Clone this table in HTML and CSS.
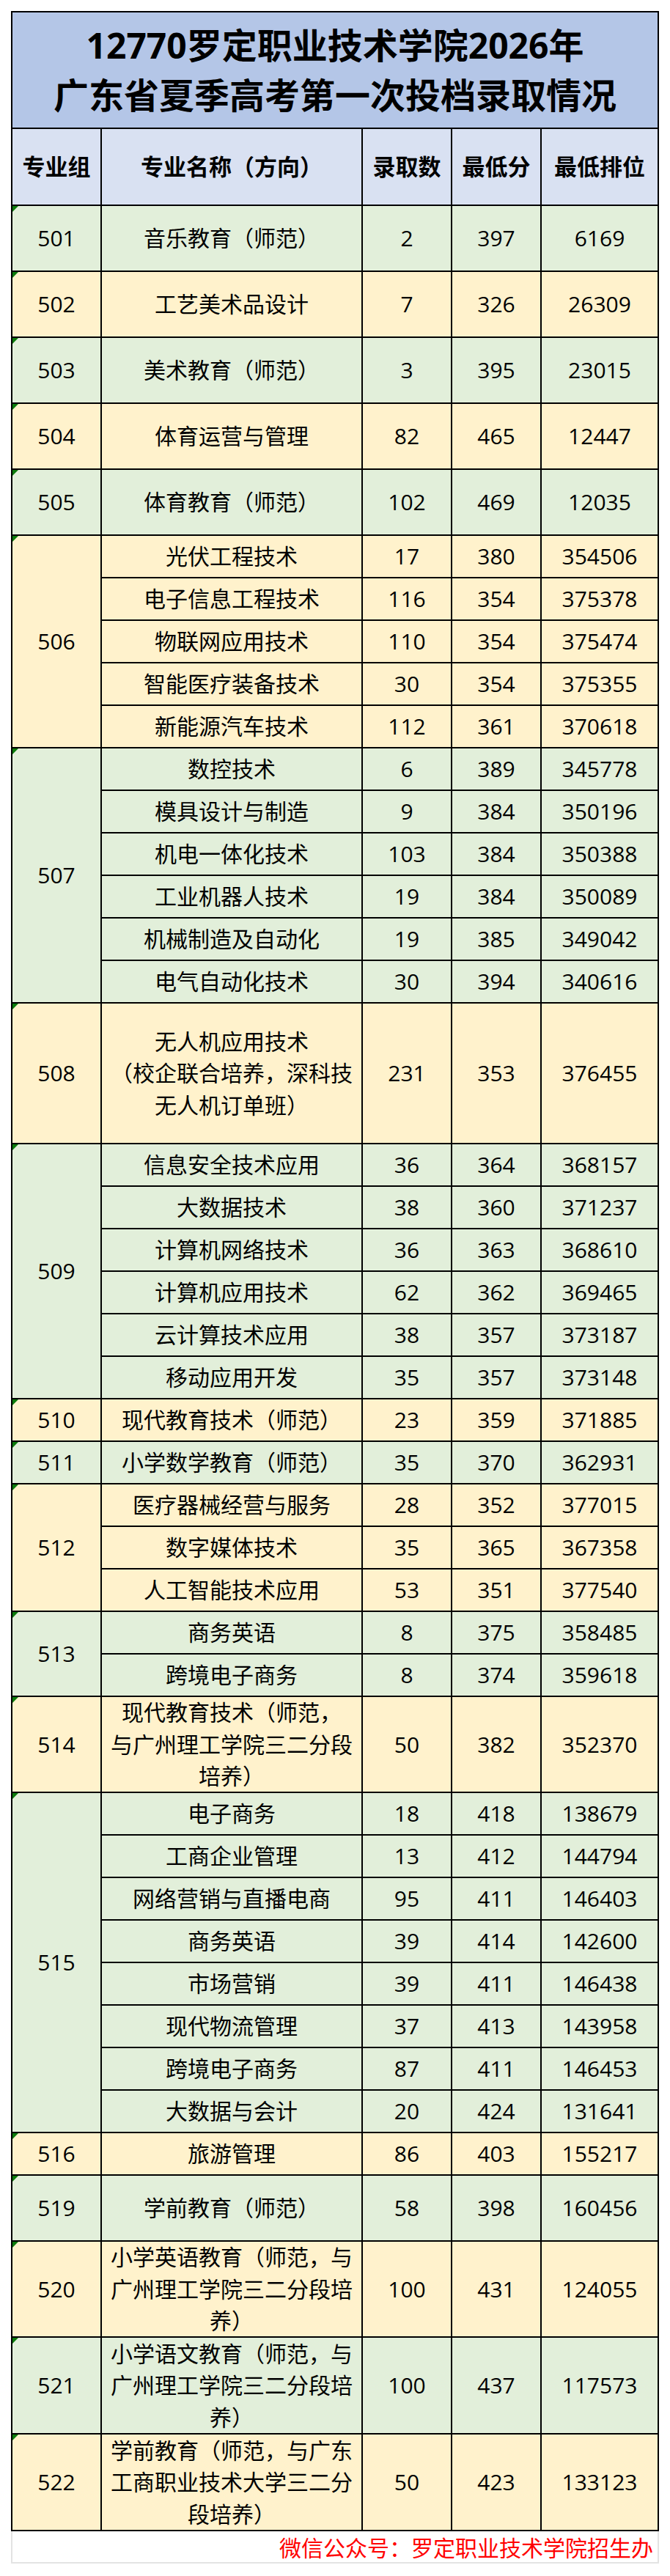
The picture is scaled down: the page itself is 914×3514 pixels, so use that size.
FILE: index.html
```html
<!DOCTYPE html>
<html lang="zh-CN">
<head>
<meta charset="utf-8">
<title>12770罗定职业技术学院2026年广东省夏季高考第一次投档录取情况</title>
<link rel="stylesheet" href="styles.css">
</head>
<body>
<div class="page">
  <div class="sheet">
    <div class="cell title">12770罗定职业技术学院2026年<br>广东省夏季高考第一次投档录取情况</div>
    <div class="cell head">专业组</div>
    <div class="cell head">专业名称（方向）</div>
    <div class="cell head">录取数</div>
    <div class="cell head">最低分</div>
    <div class="cell head">最低排位</div>

    <div class="group green">
      <div class="cell code">501</div>
      <div class="cell h90">音乐教育（师范）</div><div class="cell">2</div><div class="cell">397</div><div class="cell">6169</div>
    </div>
    <div class="group yellow">
      <div class="cell code">502</div>
      <div class="cell h90">工艺美术品设计</div><div class="cell">7</div><div class="cell">326</div><div class="cell">26309</div>
    </div>
    <div class="group green">
      <div class="cell code">503</div>
      <div class="cell h90">美术教育（师范）</div><div class="cell">3</div><div class="cell">395</div><div class="cell">23015</div>
    </div>
    <div class="group yellow">
      <div class="cell code">504</div>
      <div class="cell h90">体育运营与管理</div><div class="cell">82</div><div class="cell">465</div><div class="cell">12447</div>
    </div>
    <div class="group green">
      <div class="cell code">505</div>
      <div class="cell h90">体育教育（师范）</div><div class="cell">102</div><div class="cell">469</div><div class="cell">12035</div>
    </div>

    <div class="group yellow">
      <div class="cell code span5">506</div>
      <div class="row"><div class="cell h58">光伏工程技术</div><div class="cell">17</div><div class="cell">380</div><div class="cell">354506</div></div>
      <div class="row"><div class="cell h58">电子信息工程技术</div><div class="cell">116</div><div class="cell">354</div><div class="cell">375378</div></div>
      <div class="row"><div class="cell h58">物联网应用技术</div><div class="cell">110</div><div class="cell">354</div><div class="cell">375474</div></div>
      <div class="row"><div class="cell h58">智能医疗装备技术</div><div class="cell">30</div><div class="cell">354</div><div class="cell">375355</div></div>
      <div class="row"><div class="cell h58">新能源汽车技术</div><div class="cell">112</div><div class="cell">361</div><div class="cell">370618</div></div>
    </div>

    <div class="group green">
      <div class="cell code span6">507</div>
      <div class="row"><div class="cell h58">数控技术</div><div class="cell">6</div><div class="cell">389</div><div class="cell">345778</div></div>
      <div class="row"><div class="cell h58">模具设计与制造</div><div class="cell">9</div><div class="cell">384</div><div class="cell">350196</div></div>
      <div class="row"><div class="cell h58">机电一体化技术</div><div class="cell">103</div><div class="cell">384</div><div class="cell">350388</div></div>
      <div class="row"><div class="cell h58">工业机器人技术</div><div class="cell">19</div><div class="cell">384</div><div class="cell">350089</div></div>
      <div class="row"><div class="cell h58">机械制造及自动化</div><div class="cell">19</div><div class="cell">385</div><div class="cell">349042</div></div>
      <div class="row"><div class="cell h58">电气自动化技术</div><div class="cell">30</div><div class="cell">394</div><div class="cell">340616</div></div>
    </div>

    <div class="group yellow">
      <div class="cell code">508</div>
      <div class="cell h192">无人机应用技术<br>（校企联合培养，深科技<br>无人机订单班）</div><div class="cell">231</div><div class="cell">353</div><div class="cell">376455</div>
    </div>

    <div class="group green">
      <div class="cell code span6">509</div>
      <div class="row"><div class="cell h58">信息安全技术应用</div><div class="cell">36</div><div class="cell">364</div><div class="cell">368157</div></div>
      <div class="row"><div class="cell h58">大数据技术</div><div class="cell">38</div><div class="cell">360</div><div class="cell">371237</div></div>
      <div class="row"><div class="cell h58">计算机网络技术</div><div class="cell">36</div><div class="cell">363</div><div class="cell">368610</div></div>
      <div class="row"><div class="cell h58">计算机应用技术</div><div class="cell">62</div><div class="cell">362</div><div class="cell">369465</div></div>
      <div class="row"><div class="cell h58">云计算技术应用</div><div class="cell">38</div><div class="cell">357</div><div class="cell">373187</div></div>
      <div class="row"><div class="cell h58">移动应用开发</div><div class="cell">35</div><div class="cell">357</div><div class="cell">373148</div></div>
    </div>

    <div class="group yellow">
      <div class="cell code">510</div>
      <div class="cell h58">现代教育技术（师范）</div><div class="cell">23</div><div class="cell">359</div><div class="cell">371885</div>
    </div>
    <div class="group green">
      <div class="cell code">511</div>
      <div class="cell h58">小学数学教育（师范）</div><div class="cell">35</div><div class="cell">370</div><div class="cell">362931</div>
    </div>

    <div class="group yellow">
      <div class="cell code span3">512</div>
      <div class="row"><div class="cell h58">医疗器械经营与服务</div><div class="cell">28</div><div class="cell">352</div><div class="cell">377015</div></div>
      <div class="row"><div class="cell h58">数字媒体技术</div><div class="cell">35</div><div class="cell">365</div><div class="cell">367358</div></div>
      <div class="row"><div class="cell h58">人工智能技术应用</div><div class="cell">53</div><div class="cell">351</div><div class="cell">377540</div></div>
    </div>

    <div class="group green">
      <div class="cell code span2">513</div>
      <div class="row"><div class="cell h58">商务英语</div><div class="cell">8</div><div class="cell">375</div><div class="cell">358485</div></div>
      <div class="row"><div class="cell h58">跨境电子商务</div><div class="cell">8</div><div class="cell">374</div><div class="cell">359618</div></div>
    </div>

    <div class="group yellow">
      <div class="cell code">514</div>
      <div class="cell h131">现代教育技术（师范，<br>与广州理工学院三二分段<br>培养）</div><div class="cell">50</div><div class="cell">382</div><div class="cell">352370</div>
    </div>

    <div class="group green">
      <div class="cell code span8">515</div>
      <div class="row"><div class="cell h58">电子商务</div><div class="cell">18</div><div class="cell">418</div><div class="cell">138679</div></div>
      <div class="row"><div class="cell h58">工商企业管理</div><div class="cell">13</div><div class="cell">412</div><div class="cell">144794</div></div>
      <div class="row"><div class="cell h58">网络营销与直播电商</div><div class="cell">95</div><div class="cell">411</div><div class="cell">146403</div></div>
      <div class="row"><div class="cell h58">商务英语</div><div class="cell">39</div><div class="cell">414</div><div class="cell">142600</div></div>
      <div class="row"><div class="cell h58">市场营销</div><div class="cell">39</div><div class="cell">411</div><div class="cell">146438</div></div>
      <div class="row"><div class="cell h58">现代物流管理</div><div class="cell">37</div><div class="cell">413</div><div class="cell">143958</div></div>
      <div class="row"><div class="cell h58">跨境电子商务</div><div class="cell">87</div><div class="cell">411</div><div class="cell">146453</div></div>
      <div class="row"><div class="cell h58">大数据与会计</div><div class="cell">20</div><div class="cell">424</div><div class="cell">131641</div></div>
    </div>

    <div class="group yellow">
      <div class="cell code">516</div>
      <div class="cell h58">旅游管理</div><div class="cell">86</div><div class="cell">403</div><div class="cell">155217</div>
    </div>
    <div class="group green">
      <div class="cell code">519</div>
      <div class="cell h90">学前教育（师范）</div><div class="cell">58</div><div class="cell">398</div><div class="cell">160456</div>
    </div>
    <div class="group yellow">
      <div class="cell code">520</div>
      <div class="cell h131">小学英语教育（师范，与<br>广州理工学院三二分段培<br>养）</div><div class="cell">100</div><div class="cell">431</div><div class="cell">124055</div>
    </div>
    <div class="group green">
      <div class="cell code">521</div>
      <div class="cell h132">小学语文教育（师范，与<br>广州理工学院三二分段培<br>养）</div><div class="cell">100</div><div class="cell">437</div><div class="cell">117573</div>
    </div>
    <div class="group yellow">
      <div class="cell code">522</div>
      <div class="cell h132">学前教育（师范，与广东<br>工商职业技术大学三二分<br>段培养）</div><div class="cell">50</div><div class="cell">423</div><div class="cell">133123</div>
    </div>
  </div>
  <div class="footer">微信公众号：罗定职业技术学院招生办</div>
</div>
</body>
</html>
```

FILE: styles.css
```css
* {
  box-sizing: border-box;
}

body {
  margin: 0;
  background: #ffffff;
  color: #000000;
  font-family: "Open Sans", "Noto Sans CJK SC", sans-serif;
}

.page {
  width: 914px;
  padding: 15px;
}

.sheet {
  display: grid;
  grid-template-columns: 122px 356px 122px 122px 160px;
  width: 884px;
  border-top: 2px solid #000;
  border-left: 2px solid #000;
}

.group,
.row {
  display: contents;
}

.cell {
  display: flex;
  align-items: center;
  justify-content: center;
  text-align: center;
  border-right: 2px solid #000;
  border-bottom: 2px solid #000;
  font-size: 30px;
  line-height: 43.5px;
  white-space: nowrap;
}

.title {
  grid-column: 1 / -1;
  height: 159px;
  background: #b4c6e7;
  font-size: 48px;
  font-weight: 700;
  line-height: 68px;
}

.head {
  height: 105px;
  background: #d9e1f2;
  font-size: 31px;
  font-weight: 700;
}

.green .cell {
  background: #e2efda;
}

.yellow .cell {
  background: #fff2cc;
}

.code {
  position: relative;
}

.code::before {
  content: "";
  position: absolute;
  top: 0;
  left: 0;
  border-top: 8px solid #0b7a0b;
  border-right: 8px solid transparent;
}

.span2 { grid-row: span 2; }
.span3 { grid-row: span 3; }
.span5 { grid-row: span 5; }
.span6 { grid-row: span 6; }
.span8 { grid-row: span 8; }

.h58 { height: 58px; }
.h90 { height: 90px; }
.h131 { height: 131px; }
.h132 { height: 132px; }
.h192 { height: 192px; }

.footer {
  width: 884px;
  height: 44px;
  border: 2px solid #e3e3e3;
  border-top: 0;
  padding-right: 6px;
  text-align: right;
  color: #ff0000;
  font-family: "Noto Sans CJK SC", sans-serif;
  font-size: 30px;
  line-height: 42px;
}
```
